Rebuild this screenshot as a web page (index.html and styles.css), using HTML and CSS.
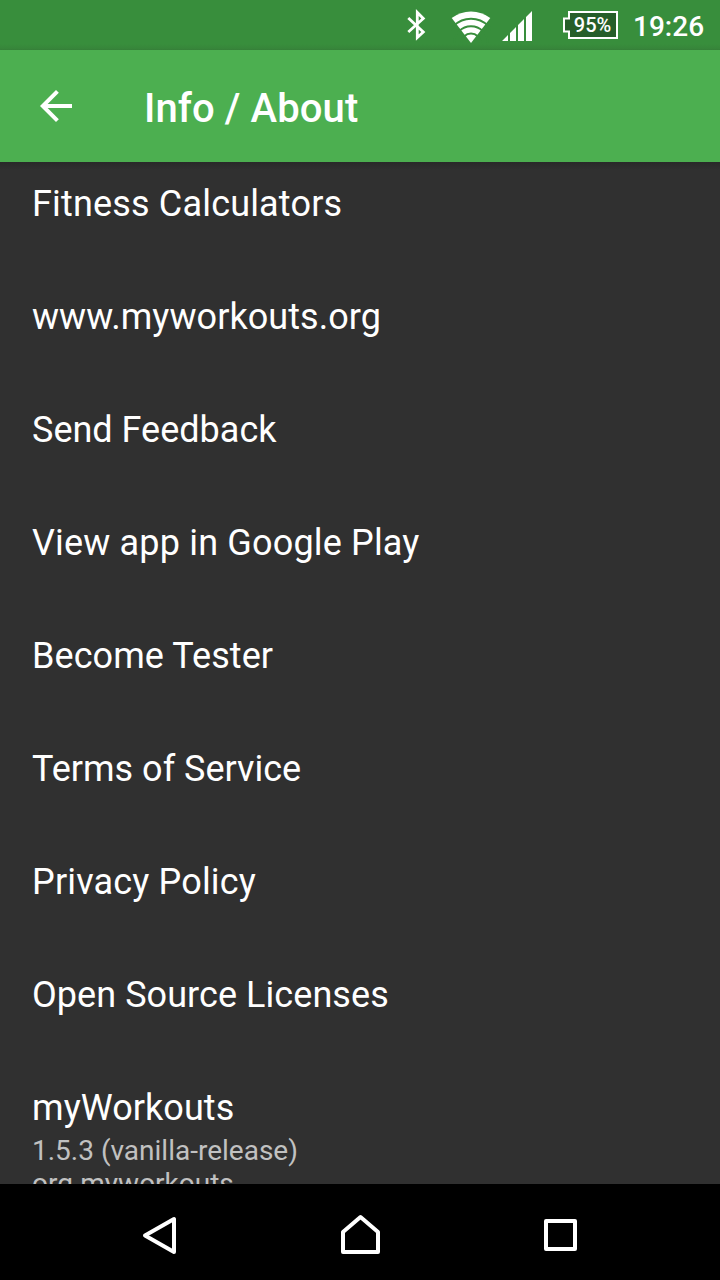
FILE: index.html
```html
<!DOCTYPE html>
<html lang="en">
<head>
<meta charset="utf-8">
<title>Info / About</title>
<link rel="stylesheet" href="styles.css">
</head>
<body>
<div class="screen">
  <div class="status">
    <svg class="bluetooth" width="20" height="32" viewBox="0 0 20 32" fill="none" stroke="#fff" stroke-width="2.8"><path d="M2.300 9L17.300 23L11.300 28.500V3.500L17.300 9.500L2.300 23"/></svg>
    <svg class="wifi" width="40" height="32" viewBox="0 0 40 32"><path d="M20 32L.700 7A31.500 31.500 0 0 1 39.300 7Z" fill="#fff"/><g fill="none" stroke="#388e3c" stroke-width="2"><circle cx="20" cy="32" r="24.200"/><circle cx="20" cy="32" r="16.800"/><circle cx="20" cy="32" r="9.500"/></g></svg>
    <svg class="signal" width="30" height="30" viewBox="0 0 30 30" fill="#fff"><path d="M0 30L6 24V30ZM8 30V22L14 16V30ZM16 30V14L22 8V30ZM24 30V6L30 0V30Z"/></svg>
    <div class="battery"><svg width="56" height="30" viewBox="0 0 56 30"><path d="M7 2H55V28H7V21.500H2V8.500H7Z" fill="#265e29" stroke="#fff" stroke-width="2"/></svg><span class="percent">95%</span></div>
    <span class="time">19:26</span>
  </div>
  <header class="toolbar">
    <svg class="back" width="48" height="48" viewBox="0 0 24 24" fill="#fff"><path d="M20 11H7.830l5.590-5.590L12 4l-8 8 8 8 1.410-1.410L7.830 13H20v-2z"/></svg>
    <h1 class="title">Info / About</h1>
  </header>
  <main class="list">
    <div class="item wide">Fitness Calculators</div>
    <div class="item">www.myworkouts.org</div>
    <div class="item even">Send Feedback</div>
    <div class="item wide">View app in Google Play</div>
    <div class="item">Become Tester</div>
    <div class="item even">Terms of Service</div>
    <div class="item wide">Privacy Policy</div>
    <div class="item">Open Source Licenses</div>
    <div class="item">myWorkouts<p class="summary">1.5.3 (vanilla-release)<br>org.myworkouts</p></div>
  </main>
  <nav class="nav">
    <svg width="40" height="42" viewBox="0 0 40 42"><path d="M5 21.500L34 5V38Z"/></svg>
    <svg width="44" height="42" viewBox="0 0 44 42"><path d="M5 18L22.500 3L40 18V38H5Z"/></svg>
    <svg width="34" height="36" viewBox="0 0 34 36"><path d="M3 4H32V32H3Z"/></svg>
  </nav>
</div>
</body>
</html>
```
FILE: styles.css
```css
body { margin: 0; font-family: Roboto, sans-serif; color: #fff; }
.screen { width: 720px; height: 1280px; display: flex; flex-direction: column; overflow: hidden; background: #303030; }
.status { height: 50px; flex: none; display: flex; align-items: center; background: linear-gradient(#388e3c 44px, #37853a 49px, #347e37); }
.bluetooth { margin-left: 406px; }
.wifi { margin: 3px 0 0 25px; }
.signal { margin: 2px 0 0 11px; }
.battery { display: grid; margin-left: 30px; }
.battery > * { grid-area: 1 / 1; }
.percent { padding-left: 5px; align-self: center; justify-self: center; font-size: 20px; font-weight: 500; line-height: 24px; }
.time { margin: 3px 0 0 15px; font-size: 28px; font-weight: 500; line-height: 50px; }
.toolbar { height: 112px; flex: none; display: flex; align-items: center; background: #4caf50; }
.back { margin-left: 32px; }
.title { margin: 6px 0 0 64px; font-size: 40px; line-height: 48px; font-weight: 500; letter-spacing: 0.1px; }
.list { flex: 1; min-height: 0; overflow: hidden; padding: 21px 32px 0; background: linear-gradient(#292929, #303030 8px); }
.item { height: 113px; font-size: 36px; line-height: 42px; letter-spacing: 0.06px; white-space: nowrap; }
.wide { letter-spacing: 0.17px; }
.even { letter-spacing: 0; }
.summary { margin: 5px 0 0; font-size: 28px; line-height: 33px; letter-spacing: 0; color: #c1c1c1; }
.nav { height: 96px; flex: none; display: grid; grid-template-columns: repeat(3, 200px); justify-content: center; justify-items: center; align-items: center; padding-top: 6px; box-sizing: border-box; background: #000; }
.nav path { fill: none; stroke: #fff; stroke-width: 4; stroke-linejoin: round; }
```
